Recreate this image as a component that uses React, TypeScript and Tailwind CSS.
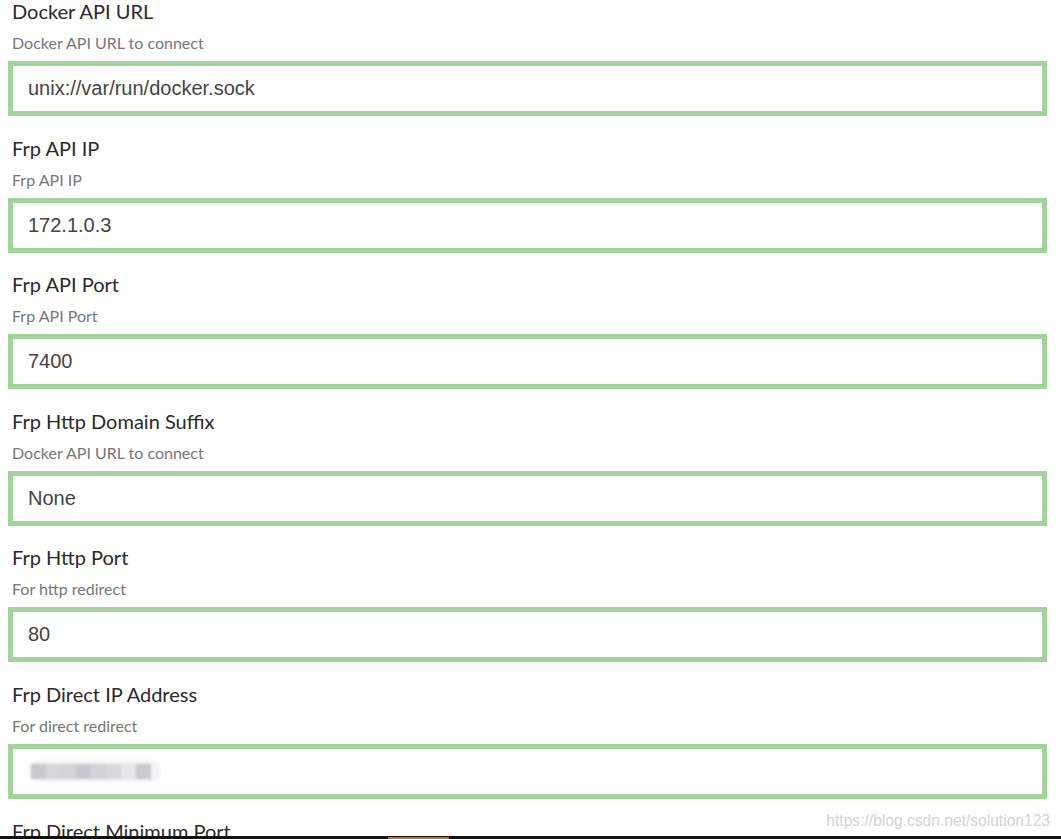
const fields = [
  { label: "Docker API URL", help: "Docker API URL to connect", value: "unix://var/run/docker.sock" },
  { label: "Frp API IP", help: "Frp API IP", value: "172.1.0.3" },
  { label: "Frp API Port", help: "Frp API Port", value: "7400" },
  { label: "Frp Http Domain Suffix", help: "Docker API URL to connect", value: "None" },
  { label: "Frp Http Port", help: "For http redirect", value: "80" },
  { label: "Frp Direct IP Address", help: "For direct redirect", value: "", masked: true },
  { label: "Frp Direct Minimum Port", help: "Minimum port for direct mode", value: "10000" },
];

// blurred-out ip in the screenshot
const maskShades = ["#c9cacd", "#d6d7da", "#d3d4d7", "#c6c9ce", "#d2d3d6", "#d8d9dc", "#e4e5e7", "#c9cacd"];

function MaskedValue() {
  return (
    <div className="flex h-full items-center">
      <div className="flex h-[22px] items-center rounded-full bg-[#f3f4f5] pl-[3px] pr-[10px] blur-[0.8px]">
        {maskShades.map((c, i) => (
          <span key={i} className="h-[15px] w-[15px]" style={{ background: c }} />
        ))}
      </div>
    </div>
  );
}

export default function App() {
  return (
    <div className="relative h-[839px] overflow-hidden bg-white">
      <form className="pl-2 pr-[14px]">
        {fields.map((f) => (
          <div key={f.label} className="mb-[20.6px]">
            <label className="block h-6 pl-1 font-['Lato',sans-serif] text-[20px] leading-[22px] text-[#2a2a2a]">
              {f.label}
            </label>
            <p className="mt-[9px] h-5 pl-1 font-['Lato',sans-serif] text-[16px] leading-5 text-[#777]">
              {f.help}
            </p>
            <div className="mt-2 h-[55px] border-[5px] border-[#a2d39b] bg-white px-[15px]">
              {f.masked ? (
                <MaskedValue />
              ) : (
                <input
                  readOnly
                  value={f.value}
                  className="h-full w-full bg-transparent font-['Liberation_Sans',Arial,sans-serif] text-[20px] text-[#444] outline-none"
                />
              )}
            </div>
          </div>
        ))}
      </form>

      <span className="pointer-events-none absolute right-[11px] top-[809px] font-['Liberation_Sans',Arial,sans-serif] text-[15.6px] text-[#d4d4d4]">
        https://blog.csdn.net/solution123
      </span>

      <div className="absolute inset-x-0 bottom-0 h-[3px] bg-[#111]">
        <div className="ml-[388px] h-[2px] w-[61px] translate-y-[1px] bg-[#b5743a]" />
      </div>
    </div>
  );
}
